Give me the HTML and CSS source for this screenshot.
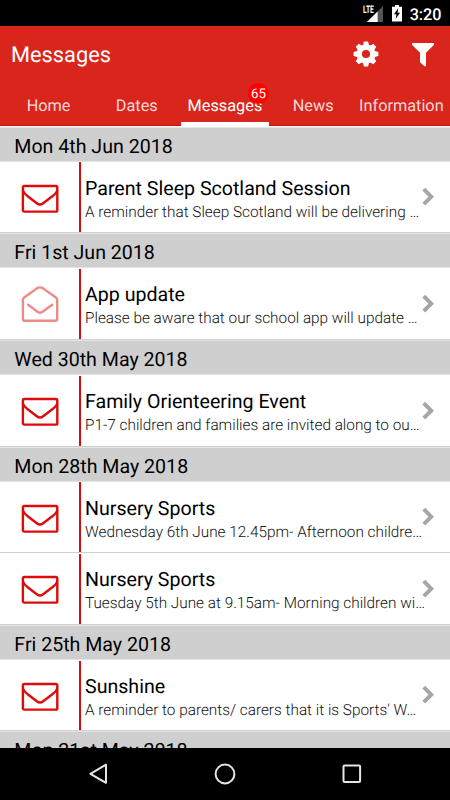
FILE: index.html
```
<!DOCTYPE html>
<html lang="en">
<head>
<meta charset="utf-8">
<title>Messages</title>
<link rel="stylesheet" href="styles.css">
</head>
<body>
<svg class="defs" width="0" height="0">
  <defs>
    <symbol id="closed" viewBox="0 0 38 40">
      <rect x="1.9" y="7" width="34.4" height="25.6" rx="1.4"/>
      <path d="M2.2 12C3 14.5 5 16 7 17.5L15.8 24.2Q19 26.8 22.2 24.2L31 17.5C33 16 35.2 14.5 36 12"/>
    </symbol>
    <symbol id="open" viewBox="0 0 38 40">
      <path d="M1.9 15Q1.9 13.4 3.2 12.4L16.5 3.1Q19 1.6 21.5 3.1L34.9 12.4Q36.2 13.4 36.2 15V33.8Q36.2 35.8 34.2 35.8H3.9Q1.9 35.8 1.9 33.8Z"/>
      <path d="M7.2 19.8L16.5 26.8Q19 28.6 21.5 26.8L31.2 19.8"/>
    </symbol>
    <symbol id="chevron" viewBox="0 0 14 20"><path d="M2.8 2.2L10.2 9.7L2.8 17.2"/></symbol>
  </defs>
</svg>
<div class="screen">
  <div class="status">
    <div class="signal">
      <svg width="20" height="18" viewBox="0 0 20 18"><path fill="#555" d="M20 1V17H4Z"/><path fill="#fff" d="M14.6 6.4V17H4Z"/></svg>
      <span class="lte">LTE</span>
    </div>
    <svg class="battery" width="10" height="17" viewBox="0 0 10 17"><path fill="#fff" d="M3 0H7V1.7H10V16.5H0V1.7H3Z"/><path fill="#000" d="M6.2 3.2L2 9.2H4.4L3.8 13.8L8 7.8H5.6Z"/></svg>
    <span class="time">3:20</span>
  </div>
  <header class="appbar">
    <div class="bar">
      <h1>Messages</h1>
      <svg class="gear" width="26" height="26" viewBox="-13 -13 26 26">
        <g fill="#fff"><circle r="9.4"/>
        <path d="M-3.2 -8L-2.1 -12.4H2.1L3.2 -8V8L2.1 12.4H-2.1L-3.2 8Z"/><path transform="rotate(45)" d="M-3.2 -8L-2.1 -12.4H2.1L3.2 -8V8L2.1 12.4H-2.1L-3.2 8Z"/><path transform="rotate(90)" d="M-3.2 -8L-2.1 -12.4H2.1L3.2 -8V8L2.1 12.4H-2.1L-3.2 8Z"/><path transform="rotate(135)" d="M-3.2 -8L-2.1 -12.4H2.1L3.2 -8V8L2.1 12.4H-2.1L-3.2 8Z"/></g>
        <circle r="4.1" fill="#da251d"/>
      </svg>
      <svg class="funnel" width="24" height="24" viewBox="0 0 24 24"><path fill="#fff" d="M1.5 0H22.4Q23.8 .8 22.8 2L15 9.8V23L13.8 23.6L9 19.2V9.8L1.2 2Q.2 .8 1.5 0Z"/></svg>
    </div>
    <nav class="tabs">
      <span class="tab">Home</span><span class="tab">Dates</span><span class="tab active">Messages<b class="badge">65</b></span><span class="tab">News</span><span class="tab">Information</span>
    </nav>
  </header>
  <main class="list">
    <h2>Mon 4th Jun 2018</h2>
    <article class="row"><div class="mail"><svg><use href="#closed"/></svg></div><div class="copy"><h3>Parent Sleep Scotland Session</h3><p>A reminder that Sleep Scotland will be delivering …</p></div><svg class="chev"><use href="#chevron"/></svg></article>
    <h2>Fri 1st Jun 2018</h2>
    <article class="row"><div class="mail read"><svg><use href="#open"/></svg></div><div class="copy"><h3>App update</h3><p>Please be aware that our school app will update …</p></div><svg class="chev"><use href="#chevron"/></svg></article>
    <h2>Wed 30th May 2018</h2>
    <article class="row"><div class="mail"><svg><use href="#closed"/></svg></div><div class="copy"><h3>Family Orienteering Event</h3><p>P1-7 children and families are invited along to ou…</p></div><svg class="chev"><use href="#chevron"/></svg></article>
    <h2>Mon 28th May 2018</h2>
    <article class="row"><div class="mail"><svg><use href="#closed"/></svg></div><div class="copy"><h3>Nursery Sports</h3><p>Wednesday 6th June 12.45pm- Afternoon childre…</p></div><svg class="chev"><use href="#chevron"/></svg></article>
    <article class="row"><div class="mail"><svg><use href="#closed"/></svg></div><div class="copy"><h3>Nursery Sports</h3><p>Tuesday 5th June at 9.15am- Morning children wi…</p></div><svg class="chev"><use href="#chevron"/></svg></article>
    <h2>Fri 25th May 2018</h2>
    <article class="row"><div class="mail"><svg><use href="#closed"/></svg></div><div class="copy"><h3>Sunshine</h3><p>A reminder to parents/ carers that it is Sports' W…</p></div><svg class="chev"><use href="#chevron"/></svg></article>
    <h2>Mon 21st May 2018</h2>
  </main>
  <footer class="navbar">
    <svg width="20" height="22" viewBox="0 0 20 22"><path d="M18 1.7V19.8L2.4 10.8Z"/></svg>
    <svg width="22" height="22" viewBox="0 0 22 22"><circle cx="11" cy="11" r="9.4"/></svg>
    <svg width="20" height="20" viewBox="0 0 20 20"><rect x="1.5" y="1.5" width="16.6" height="16.6" rx="1"/></svg>
  </footer>
</div>
</body>
</html>
```
FILE: styles.css
```
* { box-sizing: border-box; }
body { margin: 0; font-family: Roboto, "Liberation Sans", sans-serif; text-rendering: geometricPrecision; }
h1, h2, h3, p { margin: 0; font-weight: 400; white-space: nowrap; }
svg { display: block; flex: none; }
.defs { position: absolute; }
.screen { width: 450px; height: 800px; display: flex; flex-direction: column; overflow: hidden; background: #fff; }
.status { height: 26px; flex: none; background: #000; color: #fff; display: flex; align-items: center; padding: 0 8.5px 0 0; justify-content: flex-end; }
.signal { position: relative; width: 20px; height: 18px; margin: 2px 8.5px 0 0; }
.lte { position: absolute; left: 0; top: 0; font: 700 10.5px/9px Roboto, sans-serif; transform: scaleX(.64); transform-origin: left; }
.battery { margin-right: 8px; margin-top: 0; }
.time { font-size: 16.2px; font-weight: 500; line-height: 20px; padding-top: 3px; }
.appbar { height: 100px; flex: none; background: #da251d; color: #fff; border-bottom: 1px solid #d00b04; }
.bar { height: 58px; display: flex; align-items: center; padding: 0 15.5px 0 11px; }
h1 { flex: 1; font-size: 21.8px; line-height: 28px; padding-top: 2px; }
.gear { margin: 0 32px 2px 0; }
.tabs { display: flex; padding: 0 4.5px; height: 42px; }
.tab { flex: 0 0 88.2px; position: relative; text-align: center; font-size: 16.3px; line-height: 43px; color: #f8d9d8; }
.active { color: #fff; border-bottom: 4.5px solid #fff; }
.badge { position: absolute; right: 0; top: -1px; width: 21px; height: 21px; border-radius: 50%; background: #f00; color: #fff; font-size: 13.4px; font-weight: 400; line-height: 23px; }
.list { flex: 1; min-height: 0; overflow: hidden; padding-top: .5px; }
h2 { height: 35.2px; background: #cfcfcf; border-top: 1.5px solid #e5e5e5; border-bottom: 1px solid #e5e5e5; padding-left: 14.3px; font-size: 19.6px; line-height: 37px; color: #000; }
.row { height: 71.5px; display: flex; border-bottom: 1px solid #cfcfcf; }
.mail { width: 81px; border-right: 2px solid #d50c0a; margin-top: .7px; padding: 16.4px 0 0 20.5px; }
.mail svg { width: 38px; height: 40px; fill: none; stroke: #dc0c0c; stroke-width: 2.4; stroke-linecap: round; stroke-linejoin: round; }
.read svg { stroke: #ec8c89; }
.copy { flex: 1; min-width: 0; padding: 15.1px 0 0 4px; }
h3 { font-size: 19.6px; line-height: 24px; color: #000; }
p { font-size: 15.33px; font-weight: 300; line-height: 22px; color: #111; }
.chev { width: 14px; height: 20px; margin: 25.5px 15px 0 0; fill: none; stroke: #a6a6a6; stroke-width: 4; }
.navbar { height: 52px; flex: none; background: #000; display: flex; align-items: center; justify-content: space-between; padding: 0 88.5px 0 88px; }
.navbar svg { fill: none; stroke: #e6e6e6; stroke-width: 2; stroke-linejoin: round; }
```
